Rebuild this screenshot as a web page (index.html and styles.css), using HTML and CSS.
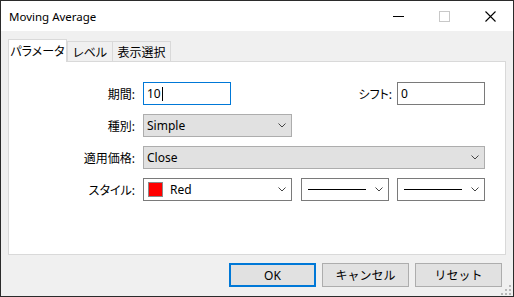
FILE: index.html
```html
<!DOCTYPE html>
<html lang="ja">
<head>
    <meta charset="UTF-8">
    <title>Moving Average</title>
    <link rel="stylesheet" href="styles.css">
</head>
<body>
    <div class="window">
        <div class="titlebar">
            <span class="title">Moving Average</span>
            <div class="caption-buttons">
                <span class="cap-btn">
                    <svg width="11" height="1" viewBox="0 0 11 1"><rect width="11" height="1" fill="#000"/></svg>
                </span>
                <span class="cap-btn">
                    <svg width="11" height="11" viewBox="0 0 11 11"><rect x="0.5" y="0.5" width="10" height="10" fill="none" stroke="#c8c8c8"/></svg>
                </span>
                <span class="cap-btn">
                    <svg width="11" height="11" viewBox="0 0 11 11"><path d="M0.5 0.5 L10.5 10.5 M10.5 0.5 L0.5 10.5" stroke="#000" stroke-width="1.1"/></svg>
                </span>
            </div>
        </div>

        <div class="client">
            <div class="tabs">
                <div class="tab active">パラメータ</div>
                <div class="tab">レベル</div>
                <div class="tab tab-last">表示選択</div>
            </div>

            <div class="panel">
                <div class="form">
                    <span class="label">期間:</span>
                    <div class="input focused">10<span class="caret"></span></div>
                    <span class="label shift-label">シフト:</span>
                    <div class="input">0</div>

                    <span class="label">種別:</span>
                    <div class="select grey narrow">
                        <span>Simple</span>
                        <svg class="chevron" width="8" height="5" viewBox="0 0 8 5"><polyline points="0.5,0.5 4,4 7.5,0.5" fill="none" stroke="#444"/></svg>
                    </div>

                    <span class="label">適用価格:</span>
                    <div class="select grey wide">
                        <span>Close</span>
                        <svg class="chevron" width="8" height="5" viewBox="0 0 8 5"><polyline points="0.5,0.5 4,4 7.5,0.5" fill="none" stroke="#444"/></svg>
                    </div>

                    <span class="label">スタイル:</span>
                    <div class="select white narrow">
                        <span class="color-value"><span class="swatch"></span>Red</span>
                        <svg class="chevron" width="8" height="5" viewBox="0 0 8 5"><polyline points="0.5,0.5 4,4 7.5,0.5" fill="none" stroke="#444"/></svg>
                    </div>
                    <div class="select white line-select">
                        <span class="line-sample"></span>
                        <svg class="chevron" width="8" height="5" viewBox="0 0 8 5"><polyline points="0.5,0.5 4,4 7.5,0.5" fill="none" stroke="#444"/></svg>
                    </div>
                    <div class="select white line-select">
                        <span class="line-sample"></span>
                        <svg class="chevron" width="8" height="5" viewBox="0 0 8 5"><polyline points="0.5,0.5 4,4 7.5,0.5" fill="none" stroke="#444"/></svg>
                    </div>
                </div>
            </div>

            <div class="buttons">
                <button class="btn default">OK</button>
                <button class="btn">キャンセル</button>
                <button class="btn">リセット</button>
            </div>
        </div>

        <svg class="grip" width="10" height="10" viewBox="0 0 10 10">
            <rect x="8" y="0" width="2" height="2" fill="#b8b8b8"/>
            <rect x="4" y="4" width="2" height="2" fill="#b8b8b8"/>
            <rect x="8" y="4" width="2" height="2" fill="#b8b8b8"/>
            <rect x="0" y="8" width="2" height="2" fill="#b8b8b8"/>
            <rect x="4" y="8" width="2" height="2" fill="#b8b8b8"/>
            <rect x="8" y="8" width="2" height="2" fill="#b8b8b8"/>
        </svg>
    </div>
</body>
</html>
```

FILE: styles.css
```css
body {
    margin: 0;
    background-color: #111;
    color: #000;
    font-family: 'Noto Sans', 'Noto Sans CJK JP', sans-serif;
    font-size: 12px;
    font-feature-settings: "palt";
}
.window {
    position: relative;
    width: 514px;
    height: 297px;
    box-sizing: border-box;
    border: 1px solid #2b2b2b;
    background-color: #f0f0f0;
    display: flex;
    flex-direction: column;
}
.titlebar {
    height: 30px;
    background-color: #ffffff;
    display: flex;
    align-items: center;
}
.title {
    flex: 1;
    padding-left: 8px;
    font-size: 11.5px;
}
.caption-buttons {
    display: flex;
}
.cap-btn {
    width: 46px;
    height: 30px;
    display: flex;
    align-items: center;
    justify-content: center;
}
.client {
    flex: 1;
    padding: 8px 7px 0 7px;
}
/* Tabs */
.tabs {
    display: flex;
    align-items: flex-end;
    height: 22px;
}
.tab {
    box-sizing: border-box;
    height: 20px;
    border: 1px solid #d9d9d9;
    border-bottom: none;
    background-color: #f0f0f0;
    display: flex;
    align-items: center;
    justify-content: center;
    width: 46px;
}
.tab.active {
    position: relative;
    z-index: 1;
    width: 59px;
    height: 23px;
    margin-bottom: -1px;
    background-color: #ffffff;
    padding-bottom: 1px;
}
.tab-last {
    width: 59px;
    margin-left: -1px;
}
.panel {
    box-sizing: border-box;
    height: 194px;
    border: 1px solid #d9d9d9;
    background-color: #ffffff;
    padding-top: 20px;
}
/* Form grid */
.form {
    display: grid;
    grid-template-columns: 126px 150px 88px 88px;
    grid-auto-rows: 23px;
    column-gap: 8px;
    row-gap: 9px;
}
.label {
    grid-column: 1;
    display: flex;
    align-items: center;
    justify-content: flex-end;
}
.shift-label {
    grid-column: 3;
    margin-right: -3px;
}
.input {
    box-sizing: border-box;
    width: 88px;
    height: 23px;
    border: 1px solid #7a7a7a;
    background-color: #ffffff;
    padding-left: 3px;
    display: flex;
    align-items: center;
}
.input.focused {
    border-color: #0078d7;
}
.caret {
    display: inline-block;
    width: 1px;
    height: 14px;
    background-color: #000;
    margin-left: 1px;
}
.select {
    box-sizing: border-box;
    height: 23px;
    border: 1px solid #7a7a7a;
    display: flex;
    align-items: center;
    justify-content: space-between;
    padding: 0 5px 0 3px;
}
.select.grey {
    background-color: #e1e1e1;
    border-color: #adadad;
}
.select.white {
    background-color: #ffffff;
}
.select.narrow {
    grid-column: 2;
    width: 149px;
}
.select.wide {
    grid-column: 2 / 5;
}
.color-value {
    display: flex;
    align-items: center;
    padding-left: 1px;
}
.swatch {
    box-sizing: border-box;
    width: 15px;
    height: 15px;
    background-color: #ff0000;
    border: 1px solid #8a8a8a;
    margin-right: 7px;
}
.line-select {
    padding-left: 6px;
}
.line-sample {
    width: 58px;
    height: 1px;
    background-color: #000;
}
.chevron {
    display: block;
}
/* Dialog buttons */
.buttons {
    display: flex;
    justify-content: flex-end;
    gap: 6px;
    margin-top: 8px;
    padding-right: 4px;
}
.btn {
    box-sizing: border-box;
    width: 87px;
    height: 24px;
    background-color: #e1e1e1;
    border: 1px solid #adadad;
    font-family: inherit;
    font-size: 12px;
    color: #000;
    padding: 0;
}
.btn.default {
    border: 2px solid #0078d7;
}
.grip {
    position: absolute;
    right: 2px;
    bottom: 1px;
}
```
